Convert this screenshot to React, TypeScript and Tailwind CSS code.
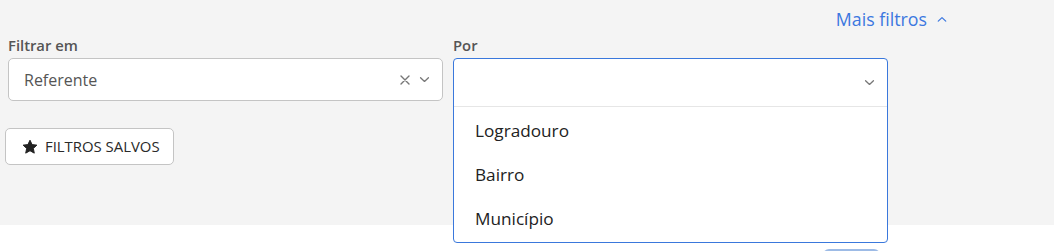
import React from "react";

const Chevron = ({ up = false, className = "" }: { up?: boolean; className?: string }) => (
  <svg width="12" height="8" viewBox="0 0 12 8" className={className} fill="none" stroke="currentColor" strokeWidth="1.5" strokeLinecap="round" strokeLinejoin="round">
    {up ? <path d="M1.5 6 L6 1.8 L10.5 6" /> : <path d="M1.5 2 L6 6.2 L10.5 2" />}
  </svg>
);

export default function App() {
  return (
    <div className="w-[1054px] h-[251px] overflow-hidden bg-white" style={{ fontFamily: '"Open Sans", "Noto Sans", sans-serif' }}>
      <div className="bg-[#f4f4f4] h-[225px] pt-[7px] pl-[8px]">
        <div className="flex justify-end pr-[107px] h-[24px] items-center">
          <button className="flex items-center gap-[10px] text-[17.8px] text-[#3c78e0] leading-[24px]">
            Mais filtros
            <Chevron up className="w-[10px] h-[7px] text-[#3c78e0] mt-[1px]" />
          </button>
        </div>
        <div className="flex gap-[10px] mt-[4px]">
          <div className="w-[435px]">
            <div className="text-[14.8px] leading-[20px] font-semibold text-[#555] mb-[3px]">Filtrar em</div>
            <div className="h-[43px] bg-white border border-[#c4c4c4] rounded-[5px] flex items-center pl-[15px] pr-[12px]">
              <span className="text-[16px] text-[#555] flex-1">Referente</span>
              <svg width="10" height="10" viewBox="0 0 10 10" className="text-[#777] mr-[9px]" stroke="currentColor" strokeWidth="1.4" strokeLinecap="round">
                <path d="M1 1 L9 9 M9 1 L1 9" />
              </svg>
              <Chevron className="w-[11px] h-[7px] text-[#777]" />
            </div>
          </div>
          <div className="w-[435px]">
            <div className="text-[14.8px] leading-[20px] font-semibold text-[#555] mb-[3px]">Por</div>
            <div className="relative h-[43px]">
              <div className="absolute left-0 top-0 w-[435px] h-[185px] bg-white border border-[#3a78dc] rounded-[4px] z-10 flex flex-col">
                <div className="h-[48px] flex items-center justify-end pr-[12px] border-b border-[#e6e6e6]">
                  <Chevron className="w-[11px] h-[7px] text-[#777]" />
                </div>
                <ul className="text-[17.2px] text-[#222] pt-[2px]">
                  <li className="h-[44px] flex items-center pl-[21px]">Logradouro</li>
                  <li className="h-[44px] flex items-center pl-[21px]">Bairro</li>
                  <li className="h-[44px] flex items-center pl-[21px]">Município</li>
                </ul>
              </div>
            </div>
          </div>
        </div>
        <div className="mt-[27px] -ml-[3px]">
          <button className="h-[37px] w-[169px] bg-white border border-[#c4c4c4] rounded-[5px] flex items-center pl-[16px] gap-[7px] text-[14.9px] text-[#2a2a2a]">
            <svg width="16" height="16" viewBox="0 0 24 24" fill="#222">
              <path d="M12 1.8 L15.1 8.4 L22.3 9.2 L17 14.1 L18.4 21.2 L12 17.6 L5.6 21.2 L7 14.1 L1.7 9.2 L8.9 8.4 Z" strokeLinejoin="round" stroke="#222" strokeWidth="1.5" />
            </svg>
            FILTROS SALVOS
          </button>
        </div>
      </div>
      <div className="pl-[823px] pt-[24px]">
        <div className="w-[57px] h-[30px] rounded-[6px] bg-[#9dbbe6]" />
      </div>
    </div>
  );
}
